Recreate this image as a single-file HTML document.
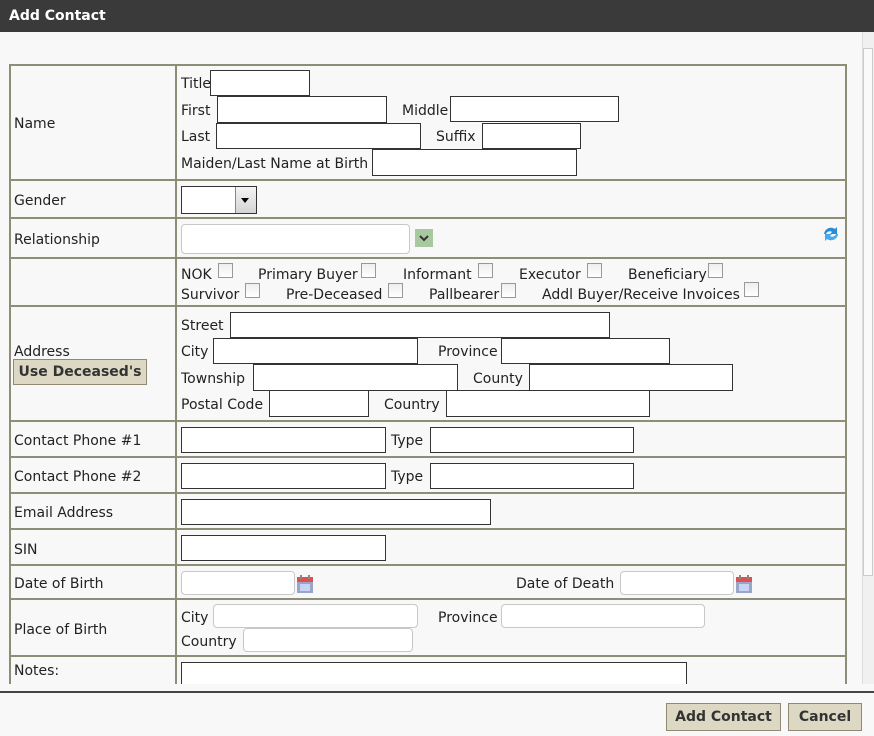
<!DOCTYPE html>
<html><head><style>
*{box-sizing:border-box;margin:0;padding:0}
body{width:874px;height:736px;background:#f8f8f8;font-family:"DejaVu Sans","Liberation Sans",sans-serif;font-size:14px;color:#222;position:relative;overflow:hidden}
.a{position:absolute}
.t{position:absolute;line-height:16px;white-space:nowrap}
.i{position:absolute;background:#fff;border:1px solid #333}
.r{position:absolute;background:#fff;border:1px solid #c8c8c8;border-radius:4px}
.c{position:absolute;width:15px;height:15px;border:1px solid #999;background:linear-gradient(#eee,#fff)}
.h{position:absolute;left:9px;width:838px;height:2px;background:#8e8e78}
.btn{position:absolute;background:#dcd8c4;border:1px solid #8e8a74;font-weight:bold;text-align:center;color:#333}
.cal{position:absolute;width:18px;height:20px}
</style></head><body>
<div class="a" style="left:0;top:0;width:874px;height:32px;background:#3a3a3a"></div>
<div class="t" style="left:9px;top:8px;color:#fff;font-weight:bold;font-size:14px">Add Contact</div>
<div class="a" style="left:0;top:32px;width:874px;height:652px;overflow:hidden">
<div style="position:relative;top:-32px;height:716px">
<div class="a" style="left:9px;top:65px;width:2px;height:640px;background:#8e8e78"></div>
<div class="a" style="left:175px;top:65px;width:2px;height:640px;background:#8e8e78"></div>
<div class="a" style="left:845px;top:65px;width:2px;height:640px;background:#8e8e78"></div>
<div class="h" style="top:64px"></div><div class="h" style="top:179px"></div><div class="h" style="top:217px"></div><div class="h" style="top:257px"></div><div class="h" style="top:305px"></div><div class="h" style="top:420px"></div><div class="h" style="top:456px"></div><div class="h" style="top:492px"></div><div class="h" style="top:528px"></div><div class="h" style="top:564px"></div><div class="h" style="top:598px"></div><div class="h" style="top:655px"></div>
<div class="t" style="left:14px;top:116px">Name</div>
<div class="t" style="left:14px;top:193px">Gender</div>
<div class="t" style="left:14px;top:232px">Relationship</div>
<div class="t" style="left:14px;top:344px">Address</div>
<div class="btn" style="left:13px;top:359px;width:134px;height:26px;line-height:24px">Use Deceased's</div>
<div class="t" style="left:14px;top:433px">Contact Phone #1</div>
<div class="t" style="left:14px;top:469px">Contact Phone #2</div>
<div class="t" style="left:14px;top:505px">Email Address</div>
<div class="t" style="left:14px;top:542px">SIN</div>
<div class="t" style="left:14px;top:576px">Date of Birth</div>
<div class="t" style="left:14px;top:622px">Place of Birth</div>
<div class="t" style="left:14px;top:663px">Notes:</div>
<div class="t" style="left:181px;top:76px">Title</div><div class="i" style="left:210px;top:70px;width:100px;height:26px"></div>
<div class="t" style="left:181px;top:103px">First</div><div class="i" style="left:217px;top:96px;width:170px;height:27px"></div>
<div class="t" style="left:402px;top:103px">Middle</div><div class="i" style="left:450px;top:96px;width:169px;height:26px"></div>
<div class="t" style="left:181px;top:129px">Last</div><div class="i" style="left:216px;top:123px;width:205px;height:26px"></div>
<div class="t" style="left:436px;top:129px">Suffix</div><div class="i" style="left:482px;top:123px;width:99px;height:26px"></div>
<div class="t" style="left:181px;top:156px">Maiden/Last Name at Birth</div><div class="i" style="left:372px;top:149px;width:205px;height:27px"></div>
<div class="i" style="left:181px;top:186px;width:76px;height:28px"></div>
<div class="a" style="left:235px;top:187px;width:21px;height:26px;background:linear-gradient(#f4f4f4,#d4d4d4);border-left:1px solid #888"></div>
<div class="a" style="left:241px;top:198px;border-left:4px solid transparent;border-right:4px solid transparent;border-top:5px solid #000"></div>
<div class="r" style="left:181px;top:224px;width:229px;height:30px"></div>
<div class="a" style="left:415px;top:229px;width:18px;height:18px;background:#a8c8a0"><svg width="18" height="18"><path d="M5 7l4 4 4-4" stroke="#333" stroke-width="2" fill="none"/></svg></div>
<svg class="a" style="left:822px;top:225px" width="18" height="18"><path d="M2 9a7 7 0 0 1 11-5l2-2v7h-7l2-2a4 4 0 0 0-6 2z" fill="#2a8ad8"/><path d="M16 9a7 7 0 0 1-11 5l-2 2v-7h7l-2 2a4 4 0 0 0 6-2z" fill="#4aa8ec"/></svg>
<div class="t" style="left:181px;top:267px">NOK</div><div class="c" style="left:218px;top:263px"></div>
<div class="t" style="left:258px;top:267px">Primary Buyer</div><div class="c" style="left:361px;top:263px"></div>
<div class="t" style="left:403px;top:267px">Informant</div><div class="c" style="left:478px;top:263px"></div>
<div class="t" style="left:519px;top:267px">Executor</div><div class="c" style="left:587px;top:263px"></div>
<div class="t" style="left:628px;top:267px">Beneficiary</div><div class="c" style="left:708px;top:263px"></div>
<div class="t" style="left:181px;top:287px">Survivor</div><div class="c" style="left:245px;top:283px"></div>
<div class="t" style="left:286px;top:287px">Pre-Deceased</div><div class="c" style="left:388px;top:283px"></div>
<div class="t" style="left:429px;top:287px">Pallbearer</div><div class="c" style="left:501px;top:283px"></div>
<div class="t" style="left:542px;top:287px">Addl Buyer/Receive Invoices</div><div class="c" style="left:744px;top:282px"></div>
<div class="t" style="left:181px;top:318px">Street</div><div class="i" style="left:230px;top:312px;width:380px;height:26px"></div>
<div class="t" style="left:181px;top:344px">City</div><div class="i" style="left:213px;top:338px;width:205px;height:26px"></div>
<div class="t" style="left:438px;top:344px">Province</div><div class="i" style="left:501px;top:338px;width:169px;height:26px"></div>
<div class="t" style="left:181px;top:371px">Township</div><div class="i" style="left:253px;top:364px;width:205px;height:27px"></div>
<div class="t" style="left:473px;top:371px">County</div><div class="i" style="left:529px;top:364px;width:204px;height:27px"></div>
<div class="t" style="left:181px;top:397px">Postal Code</div><div class="i" style="left:269px;top:390px;width:100px;height:27px"></div>
<div class="t" style="left:384px;top:397px">Country</div><div class="i" style="left:446px;top:390px;width:204px;height:27px"></div>
<div class="i" style="left:181px;top:427px;width:205px;height:26px"></div><div class="t" style="left:391px;top:433px">Type</div><div class="i" style="left:430px;top:427px;width:204px;height:26px"></div>
<div class="i" style="left:181px;top:463px;width:205px;height:26px"></div><div class="t" style="left:391px;top:469px">Type</div><div class="i" style="left:430px;top:463px;width:204px;height:26px"></div>
<div class="i" style="left:181px;top:499px;width:310px;height:26px"></div>
<div class="i" style="left:181px;top:535px;width:205px;height:26px"></div>
<div class="r" style="left:181px;top:571px;width:114px;height:24px"></div>
<svg class="cal" style="left:296px;top:574px" viewBox="0 0 18 20"><rect x="1" y="3" width="16" height="16" fill="#9aa6c8"/><rect x="1" y="3" width="16" height="5" fill="#e05050"/><rect x="4" y="10" width="10" height="7" fill="#c8d4f4"/><rect x="4" y="1" width="2" height="4" fill="#888"/><rect x="12" y="1" width="2" height="4" fill="#888"/></svg>
<div class="t" style="left:516px;top:576px">Date of Death</div>
<div class="r" style="left:620px;top:571px;width:114px;height:24px"></div>
<svg class="cal" style="left:735px;top:574px" viewBox="0 0 18 20"><rect x="1" y="3" width="16" height="16" fill="#9aa6c8"/><rect x="1" y="3" width="16" height="5" fill="#e05050"/><rect x="4" y="10" width="10" height="7" fill="#c8d4f4"/><rect x="4" y="1" width="2" height="4" fill="#888"/><rect x="12" y="1" width="2" height="4" fill="#888"/></svg>
<div class="t" style="left:181px;top:610px">City</div><div class="r" style="left:213px;top:604px;width:205px;height:24px"></div>
<div class="t" style="left:438px;top:610px">Province</div><div class="r" style="left:501px;top:604px;width:204px;height:24px"></div>
<div class="t" style="left:181px;top:634px">Country</div><div class="r" style="left:243px;top:628px;width:170px;height:24px"></div>
<div class="i" style="left:181px;top:662px;width:506px;height:50px"></div>
</div></div>
<div class="a" style="left:862px;top:32px;width:12px;height:652px;background:#f0f0f0;border-left:1px solid #ddd"></div>
<div class="a" style="left:863px;top:48px;width:10px;height:528px;background:#fafafa;border:1px solid #ccc"></div>
<div class="a" style="left:0;top:691px;width:874px;height:2px;background:#444"></div>
<div class="btn" style="left:666px;top:703px;width:115px;height:28px;line-height:26px">Add Contact</div>
<div class="btn" style="left:788px;top:703px;width:74px;height:28px;line-height:26px">Cancel</div>
</body></html>
